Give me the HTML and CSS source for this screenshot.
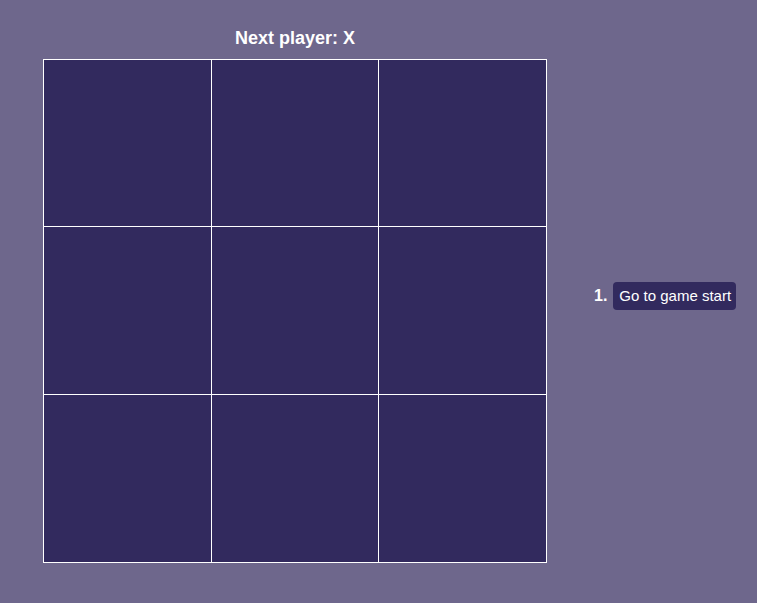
FILE: index.html
```html
<!DOCTYPE html>
<html lang="en">
<head>
  <meta charset="UTF-8" />
  <meta name="viewport" content="width=device-width, initial-scale=1.0"/>
  <title>Tic-Tac-Toe</title>
  <link rel="stylesheet" href="styles.css">
</head>
<body>
  <main class="game">
    <!-- Board -->
    <section class="game-board">
      <div class="status">Next player: X</div>
      <div class="board">
        <button class="square"></button>
        <button class="square"></button>
        <button class="square"></button>
        <button class="square"></button>
        <button class="square"></button>
        <button class="square"></button>
        <button class="square"></button>
        <button class="square"></button>
        <button class="square"></button>
      </div>
    </section>

    <!-- History -->
    <section class="game-info">
      <ol class="moves">
        <li class="move">
          <span class="move-num">1.</span>
          <button class="move-btn">Go to game start</button>
        </li>
      </ol>
    </section>
  </main>
</body>
</html>
```

FILE: styles.css
```css
body {
  margin: 0;
  background: #6e678c;
  color: #fff;
  font-family: 'Liberation Sans', Arial, sans-serif;
}
.game {
  display: flex;
  align-items: center;
  padding: 28px 0 0 43px;
}
.status {
  text-align: center;
  font-size: 18px;
  font-weight: bold;
  line-height: 21px;
  margin-bottom: 10px;
}
.board {
  width: 504px;
  height: 504px;
  box-sizing: border-box;
  display: grid;
  grid-template-columns: 167px 166px 167px;
  grid-template-rows: 166px 167px 167px;
  gap: 1px;
  padding: 1px;
  background: #fff;
}
.square {
  background: #322a5e;
  border: none;
  padding: 0;
  margin: 0;
}
.game-info {
  margin-left: 47px;
}
.moves {
  list-style: none;
  margin: 0;
  padding: 0;
}
.move {
  display: flex;
  align-items: center;
  gap: 6px;
}
.move-num {
  font-size: 16px;
  font-weight: bold;
}
.move-btn {
  background: #322a5e;
  color: #fff;
  border: none;
  border-radius: 4px;
  padding: 6px 5px 6px 6px;
  font-family: 'Liberation Sans', Arial, sans-serif;
  font-size: 15px;
  line-height: 16px;
  cursor: pointer;
}
```
